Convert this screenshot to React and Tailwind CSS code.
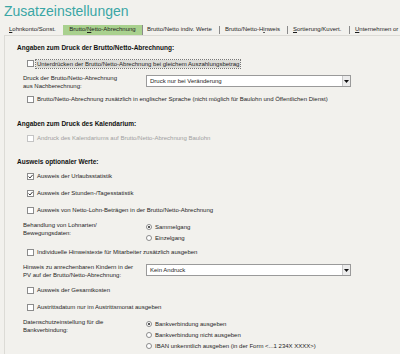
import React from "react";

function Box({ checked, disabled }) {
  return (
    <span
      className={
        "flex w-[7px] h-[7px] shrink-0 items-center justify-center border bg-white " +
        (disabled ? "border-[#c4c4c4]" : "border-[#8c8c8c]")
      }
    >
      {checked && (
        <svg width="5" height="5" viewBox="0 0 5 5">
          <path d="M0.5 2.5 L2 4 L4.6 0.9" stroke="#3a3a3a" fill="none" strokeWidth="1" />
        </svg>
      )}
    </span>
  );
}

function Radio({ checked }) {
  return (
    <span className="flex w-[6px] h-[6px] shrink-0 items-center justify-center rounded-full border border-[#8c8c8c] bg-white">
      {checked && <span className="w-[2px] h-[2px] rounded-full bg-[#222]" />}
    </span>
  );
}

function Check({ label, checked, disabled, focus, className }) {
  return (
    <div className={"flex items-center pl-[22px] " + className}>
      <Box checked={checked} disabled={disabled} />
      <span
        className={
          "ml-[2px] px-[1px] leading-[8px] " +
          (disabled ? "text-[#a0a0a0] " : "text-[#1e1e1e] ") +
          (focus ? "bg-[#dcdcd8] outline outline-1 outline-dotted outline-[#777]" : "")
        }
      >
        {label}
      </span>
    </div>
  );
}

function Select({ value }) {
  return (
    <div className="flex h-[12px] w-[205px] items-stretch border border-[#9a9a9a] bg-white">
      <span className="flex-1 pl-[3px] leading-[10px] text-[#1e1e1e]">{value}</span>
      <span className="flex w-[8px] items-center justify-center border-l border-[#c8c8c8] bg-[#ececec]">
        <svg width="5" height="3" viewBox="0 0 5 3">
          <path d="M0 0 H5 L2.5 3 Z" fill="#111" />
        </svg>
      </span>
    </div>
  );
}

function RadioRow({ label, checked, className }) {
  return (
    <div className={"flex items-center " + className}>
      <Radio checked={checked} />
      <span className="ml-[3px] leading-[8px] text-[#1e1e1e]">{label}</span>
    </div>
  );
}

function Header({ children, className }) {
  return (
    <div className={"pl-[12px] text-[6.5px] font-bold leading-[10px] text-[#111] " + className}>
      {children}
    </div>
  );
}

export default function App() {
  return (
    <div className="w-[400px] h-[354px] overflow-hidden bg-[#f2f1ed] font-['Liberation_Sans',Arial,sans-serif] text-[6px]">
      <div className="h-[24px] pl-[4px] pt-[1px] text-[14px] leading-[20px] text-[#3aa6a5]">
        Zusatzeinstellungen
      </div>
      <div className="flex h-[11px] items-center whitespace-nowrap text-[#1e1e1e]">
        <span className="ml-[9px] w-[54px]"><u>L</u>ohnkonto/Sonst.</span>
        <span className="flex h-[10px] w-[80px] items-center justify-center border-r border-[#8a8a8a] bg-[#a9d18e]">
          Brutto/<u>N</u>etto-Abrechnung
        </span>
        <span className="ml-[4px] w-[72px]">Brutto/Netto indiv. Werte</span>
        <span className="h-[8px] w-[1px] bg-[#8a8a8a]" />
        <span className="ml-[5px] w-[62px]">Brutto/Netto-H<u>i</u>nweis</span>
        <span className="h-[8px] w-[1px] bg-[#8a8a8a]" />
        <span className="ml-[5px] w-[56px]"><u>S</u>ortierung/Kuvert.</span>
        <span className="h-[8px] w-[1px] bg-[#8a8a8a]" />
        <span className="ml-[5px]"><u>U</u>nternehmen or</span>
      </div>
      <div className="ml-[4px] h-[320px] border-l border-t border-[#dcdbd6] whitespace-nowrap">
        <Header className="mt-[7px]">Angaben zum Druck der Brutto/Netto-Abrechnung:</Header>
        <Check className="mt-[6px] h-[9px]" label="Unterdrücken der Brutto/Netto-Abrechnung bei gleichem Auszahlungsbetrag" focus />
        <div className="mt-[6px] flex h-[16px] items-start">
          <div className="w-[141px] pl-[18px] leading-[8px] text-[#1e1e1e]">
            Druck der Brutto/Netto-Abrechnung
            <br />
            aus Nachberechnung:
          </div>
          <div className="mt-[1px]">
            <Select value="Druck nur bei Veränderung" />
          </div>
        </div>
        <Check className="mt-[4px] h-[10px]" label="Brutto/Netto-Abrechnung zusätzlich in englischer Sprache (nicht möglich für Baulohn und Öffentlichen Dienst)" />
        <Header className="mt-[15px]">Angaben zum Druck des Kalendarium:</Header>
        <Check className="mt-[4px] h-[10px]" disabled label="Andruck des Kalendariums auf Brutto/Netto-Abrechnung Baulohn" />
        <Header className="mt-[14px]">Ausweis optionaler Werte:</Header>
        <Check className="mt-[4px] h-[10px]" checked label="Ausweis der Urlaubsstatistik" />
        <Check className="mt-[7px] h-[10px]" checked label="Ausweis der Stunden-/Tagesstatistik" />
        <Check className="mt-[7px] h-[10px]" label="Ausweis von Netto-Lohn-Beträgen in der Brutto/Netto-Abrechnung" />
        <div className="mt-[6px] flex h-[22px] items-start">
          <div className="w-[141px] pl-[18px] leading-[8px] text-[#1e1e1e]">
            Behandlung von Lohnarten/
            <br />
            Bewegungsdaten:
          </div>
          <div className="flex flex-col">
            <RadioRow className="h-[11px]" checked label="Sammelgang" />
            <RadioRow className="h-[11px]" label="Einzelgang" />
          </div>
        </div>
        <Check className="mt-[4px] h-[10px]" label="Individuelle Hinweistexte für Mitarbeiter zusätzlich ausgeben" />
        <div className="mt-[6px] flex h-[16px] items-start">
          <div className="w-[141px] pl-[18px] leading-[8px] text-[#1e1e1e]">
            Hinweis zu anrechenbaren Kindern in der
            <br />
            PV auf der Brutto/Netto-Abrechnung:
          </div>
          <div className="mt-[1px]">
            <Select value="Kein Andruck" />
          </div>
        </div>
        <Check className="mt-[6px] h-[10px]" label="Ausweis der Gesamtkosten" />
        <Check className="mt-[7px] h-[10px]" label="Austrittsdatum nur im Austrittsmonat ausgeben" />
        <div className="mt-[6px] flex items-start">
          <div className="w-[141px] pl-[18px] leading-[8px] text-[#1e1e1e]">
            Datenschutzeinstellung für die
            <br />
            Bankverbindung:
          </div>
          <div className="flex flex-col">
            <RadioRow className="h-[11px]" checked label="Bankverbindung ausgeben" />
            <RadioRow className="h-[11px]" label="Bankverbindung nicht ausgeben" />
            <RadioRow className="h-[11px]" label="IBAN unkenntlich ausgeben (in der Form <...1 234X XXXX>)" />
          </div>
        </div>
      </div>
    </div>
  );
}
